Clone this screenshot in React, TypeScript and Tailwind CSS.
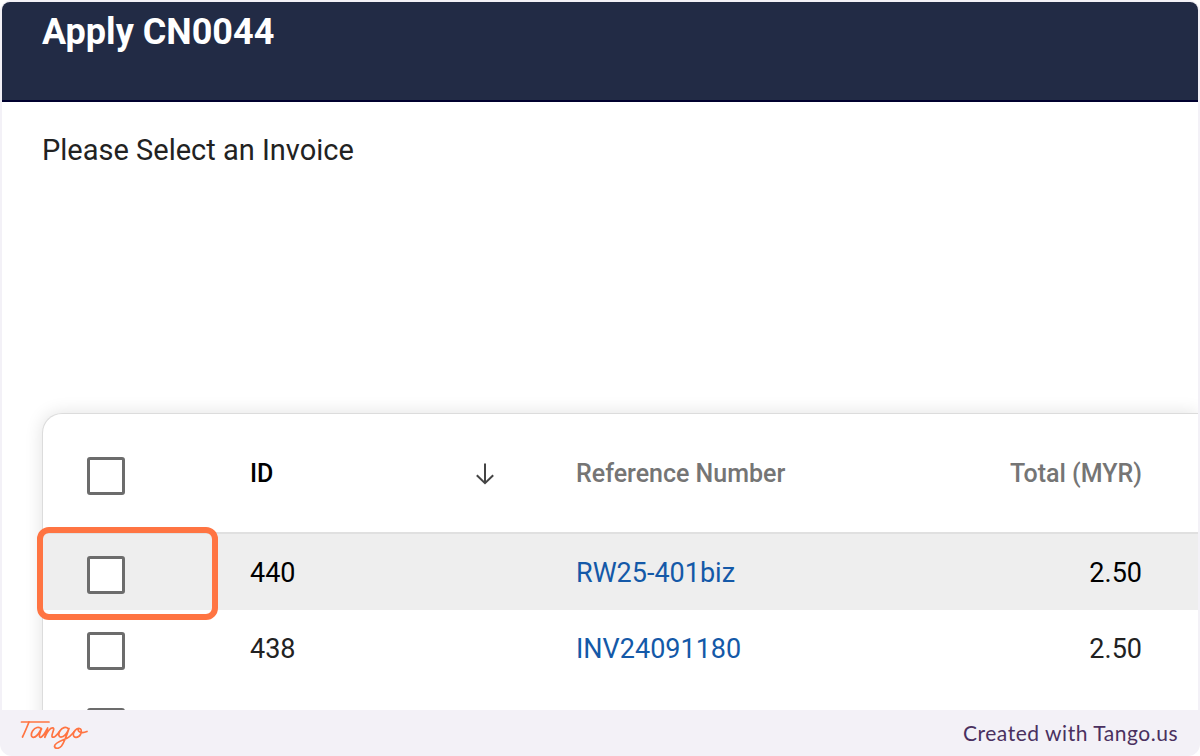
type Invoice = { id: string; reference: string; total: string; active?: boolean };

const invoices: Invoice[] = [
  { id: "440", reference: "RW25-401biz", total: "2.50", active: true },
  { id: "438", reference: "INV24091180", total: "2.50" },
  { id: "", reference: "", total: "" },
];

function Tick({ label }: { label: string }) {
  return (
    <input
      type="checkbox"
      aria-label={label}
      className="block size-[38px] appearance-none rounded-[3px] border-3 border-[#6c6c6c] bg-white checked:bg-[#0b57a8]"
    />
  );
}

function ArrowDown() {
  return (
    <svg viewBox="0 0 20 24" className="h-6 w-5" fill="none" stroke="#444" strokeWidth="2" aria-hidden="true">
      <path d="M10 1.5V21M1.8 13.2 10 21.2 18.2 13.2" />
    </svg>
  );
}

function TangoLogo() {
  return (
    <svg
      viewBox="0 -3 70 32"
      className="h-8 w-[70px]"
      fill="none"
      stroke="#ff7442"
      strokeWidth="1.7"
      strokeLinecap="round"
      strokeLinejoin="round"
      role="img"
      aria-label="Tango"
    >
      <path d="M2.5 2H30" />
      <path d="M10 2C8 7 6 12 3.500 17" />
      <path d="M22.500 9C20 6 16 7.500 13.700 10.700C11.500 14 12 17.300 14.500 17.300C18 17.300 20.500 12.500 22.500 8.500C21 12.500 19.200 17.200 21.500 17.300C24 17.300 26.500 12 28.700 8L25.800 17.300C27.500 13.500 31 7.800 33.800 7.900C36.500 8 32.200 14.500 33 16.500C34.300 19 38.500 14.500 40.500 11.500" />
      <path d="M49.500 9C47 6 43 7.700 41 10.700C39 14 39.500 17 42 17.100C45.500 17.100 48.500 12 50 8.500C48 14.500 45.500 22 42.500 26C40 29 36 29 35.500 26.500C35 23 43 20.500 48 18.200C51.500 16.500 53 14 55.300 11.500" />
      <path d="M60.500 8.500C57.500 8 54.500 11.500 54.300 14.300C54.200 18.500 59.500 18 61.500 14.500C63.500 11 61.800 7.800 59.800 8.700C57.500 10 61 14.500 68 11.500" />
    </svg>
  );
}

export default function App() {
  return (
    <div className="h-screen bg-white font-['Roboto',sans-serif]">
      <div className="flex h-full flex-col overflow-hidden rounded-xl bg-[#f3f1f7]">
        <main className="mx-0.5 mt-0.5 min-h-0 flex-1 overflow-hidden rounded-t-lg bg-white">
          <header className="h-[100px] border-b-2 border-[#00002f] bg-[#222b45] px-10 pt-2">
            <h1 className="text-[36px] leading-[44px] font-bold text-white">Apply CN0044</h1>
          </header>
          <p className="px-10 pt-7 text-[29px] leading-10 text-[#222]">Please Select an Invoice</p>
          <section className="mt-[243px] ml-10 rounded-tl-[20px] border-t border-l border-[#dcdcdc] bg-white shadow-[0_0_18px_rgba(0,0,0,0.12)]">
            <table className="w-full table-fixed border-collapse text-left">
              <colgroup>
                <col className="w-[170px]" />
                <col className="w-[326px]" />
                <col />
                <col className="w-[320px]" />
              </colgroup>
              <thead>
                <tr className="h-[119px] border-b-2 border-[#e0e0e0] text-[25px] text-[#757575]">
                  <th className="pt-1.5 pl-11">
                    <Tick label="Select all invoices" />
                  </th>
                  <th className="pt-0.5 pr-11 pl-[37px] font-medium text-black">
                    <button type="button" className="flex w-full items-center justify-between">
                      ID
                      <ArrowDown />
                    </button>
                  </th>
                  <th className="pt-0.5 pl-[37px] font-medium">Reference Number</th>
                  <th className="pt-0.5 pr-14 text-right font-medium">Total (MYR)</th>
                </tr>
              </thead>
              <tbody>
                {invoices.map((invoice, index) => (
                  <tr
                    key={index}
                    className={invoice.active ? "h-[77px] bg-[#eee] text-[27px] text-black" : "h-[76px] text-[27px] text-[#222]"}
                  >
                    <td className="relative pt-1.5 pl-11">
                      <Tick label={`Select invoice ${invoice.id}`} />
                      {invoice.active && (
                        <span className="pointer-events-none absolute -top-[7px] -right-[5px] -bottom-[10px] -left-1.5 rounded-xl border-6 border-[#ff7442]" />
                      )}
                    </td>
                    <td className="pt-0.5 pl-[37px]">{invoice.id}</td>
                    <td className="pt-0.5 pl-[37px]">
                      {invoice.reference && (
                        <a href="#" className="text-[#1459a8]">
                          {invoice.reference}
                        </a>
                      )}
                    </td>
                    <td className="pt-0.5 pr-14 text-right">{invoice.total}</td>
                  </tr>
                ))}
              </tbody>
            </table>
          </section>
        </main>
        <footer className="flex h-[46px] shrink-0 items-center justify-between pr-[22px] pl-[19px]">
          <TangoLogo />
          <a href="#" className="font-['Lato',sans-serif] text-[21px] leading-6 tracking-wide text-[#4a3060]">
            Created with Tango.us
          </a>
        </footer>
      </div>
    </div>
  );
}
